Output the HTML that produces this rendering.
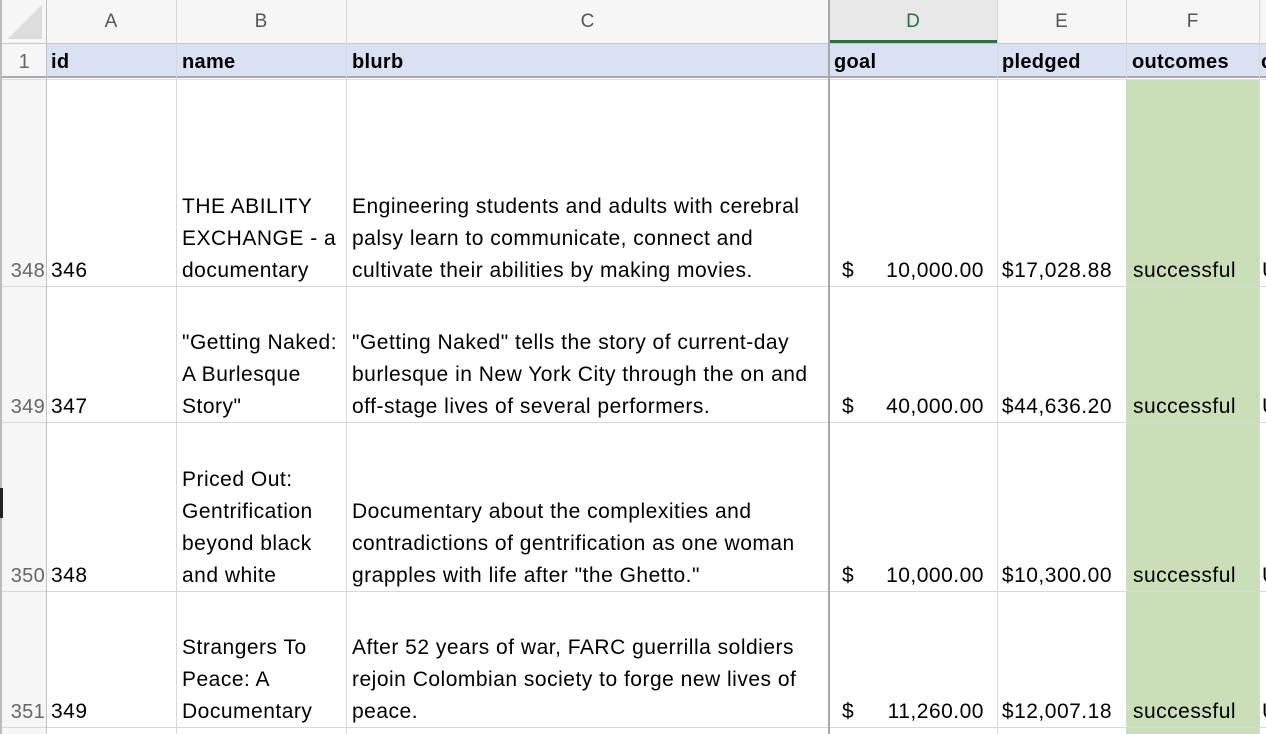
<!DOCTYPE html>
<html><head><meta charset="utf-8"><style>
body{margin:0;width:1266px;height:734px;overflow:hidden;background:#fff;position:relative;font-family:"Liberation Sans",sans-serif;}
.a{position:absolute;}
.h{position:absolute;height:1px;background:#d8d8d8;left:0;width:1266px;}
.v{position:absolute;width:1px;background:#d8d8d8;top:0;height:734px;}
.col{position:absolute;top:0;height:43px;line-height:44px;text-align:center;color:#555;font-size:19px;}
.t{position:absolute;font-size:21px;letter-spacing:0.5px;line-height:32px;color:#000;white-space:nowrap;display:flex;flex-direction:column;justify-content:flex-end;}
.rn{position:absolute;left:0;width:45px;text-align:right;font-size:20px;letter-spacing:0.3px;color:#666;line-height:32px;}
.b{position:absolute;top:46px;font-size:20px;letter-spacing:0.3px;font-weight:bold;line-height:32px;}
</style></head><body>
<div class="a" style="left:0;top:0;width:1266px;height:43px;background:#f6f6f6"></div>
<div class="a" style="left:0;top:0;width:46px;height:734px;background:#f6f6f6"></div>
<div class="a" style="left:8px;top:5px;width:34px;height:34px;background:linear-gradient(135deg,transparent 50%,#dcdcdc 50%)"></div>
<div class="a" style="left:46px;top:43px;width:1220px;height:34px;background:#d9e1f2"></div>
<div class="a" style="left:1126px;top:80px;width:133px;height:654px;background:#cadfb8"></div>
<div class="a" style="left:829px;top:0;width:168px;height:43px;background:#e8e8e8"></div>
<div class="a" style="left:829px;top:40px;width:168px;height:3px;background:#217346"></div>
<div class="col" style="left:46px;width:130px">A</div>
<div class="col" style="left:176px;width:170px">B</div>
<div class="col" style="left:346px;width:483px">C</div>
<div class="col" style="left:829px;width:168px;color:#217346">D</div>
<div class="col" style="left:997px;width:129px">E</div>
<div class="col" style="left:1126px;width:133px">F</div>
<!-- lines -->
<div class="h" style="top:43px;background:#c8c8c8"></div>
<div class="h" style="top:76px;height:2px;background:#aaa"></div>
<div class="h" style="top:79px;background:#e0e0e0"></div>
<div class="h" style="top:286px"></div>
<div class="h" style="top:422px"></div>
<div class="h" style="top:591px"></div>
<div class="h" style="top:727px"></div>
<div class="v" style="left:46px;background:#c0c0c0"></div>
<div class="v" style="left:176px"></div>
<div class="v" style="left:346px"></div>
<div class="v" style="left:828px;width:2px;background:#a8a8a8"></div>
<div class="v" style="left:997px"></div>
<div class="v" style="left:1126px"></div>
<div class="v" style="left:1259px"></div>
<div class="v" style="left:0;width:2px;background:#bbb"></div>
<div class="a" style="left:0;top:488px;width:3px;height:30px;background:#222"></div>
<!-- header row -->
<div class="rn" style="top:46px;width:30px;left:0">1</div>
<div class="b" style="left:51px">id</div>
<div class="b" style="left:182px">name</div>
<div class="b" style="left:352px">blurb</div>
<div class="b" style="left:834px">goal</div>
<div class="b" style="left:1002px">pledged</div>
<div class="b" style="left:1132px">outcomes</div>
<div class="b" style="left:1261px">c</div>

<!-- row 348 -->
<div class="rn" style="top:255px">348</div>
<div class="t" style="left:51px;top:255px">346</div>
<div class="t" style="left:182px;top:191px">THE ABILITY<br>EXCHANGE - a<br>documentary</div>
<div class="t" style="left:352px;top:191px">Engineering students and adults with cerebral<br>palsy learn to communicate, connect and<br>cultivate their abilities by making movies.</div>
<div class="t" style="left:842px;top:255px">$</div>
<div class="t" style="left:860px;width:124px;top:255px;align-items:flex-end">10,000.00</div>
<div class="t" style="left:990px;width:122px;top:255px;align-items:flex-end">$17,028.88</div>
<div class="t" style="left:1133px;top:255px">successful</div>
<div class="t" style="left:1262px;top:255px">U</div>

<!-- row 349 -->
<div class="rn" style="top:391px">349</div>
<div class="t" style="left:51px;top:391px">347</div>
<div class="t" style="left:182px;top:327px">"Getting Naked:<br>A Burlesque<br>Story"</div>
<div class="t" style="left:352px;top:327px">"Getting Naked" tells the story of current-day<br>burlesque in New York City through the on and<br>off-stage lives of several performers.</div>
<div class="t" style="left:842px;top:391px">$</div>
<div class="t" style="left:860px;width:124px;top:391px;align-items:flex-end">40,000.00</div>
<div class="t" style="left:990px;width:122px;top:391px;align-items:flex-end">$44,636.20</div>
<div class="t" style="left:1133px;top:391px">successful</div>
<div class="t" style="left:1262px;top:391px">U</div>

<!-- row 350 -->
<div class="rn" style="top:560px">350</div>
<div class="t" style="left:51px;top:560px">348</div>
<div class="t" style="left:182px;top:464px">Priced Out:<br>Gentrification<br>beyond black<br>and white</div>
<div class="t" style="left:352px;top:496px">Documentary about the complexities and<br>contradictions of gentrification as one woman<br>grapples with life after "the Ghetto."</div>
<div class="t" style="left:842px;top:560px">$</div>
<div class="t" style="left:860px;width:124px;top:560px;align-items:flex-end">10,000.00</div>
<div class="t" style="left:990px;width:122px;top:560px;align-items:flex-end">$10,300.00</div>
<div class="t" style="left:1133px;top:560px">successful</div>
<div class="t" style="left:1262px;top:560px">U</div>

<!-- row 351 -->
<div class="rn" style="top:696px">351</div>
<div class="t" style="left:51px;top:696px">349</div>
<div class="t" style="left:182px;top:632px">Strangers To<br>Peace: A<br>Documentary</div>
<div class="t" style="left:352px;top:632px">After 52 years of war, FARC guerrilla soldiers<br>rejoin Colombian society to forge new lives of<br>peace.</div>
<div class="t" style="left:842px;top:696px">$</div>
<div class="t" style="left:860px;width:124px;top:696px;align-items:flex-end">11,260.00</div>
<div class="t" style="left:990px;width:122px;top:696px;align-items:flex-end">$12,007.18</div>
<div class="t" style="left:1133px;top:696px">successful</div>
<div class="t" style="left:1262px;top:696px">U</div>
</body></html>
